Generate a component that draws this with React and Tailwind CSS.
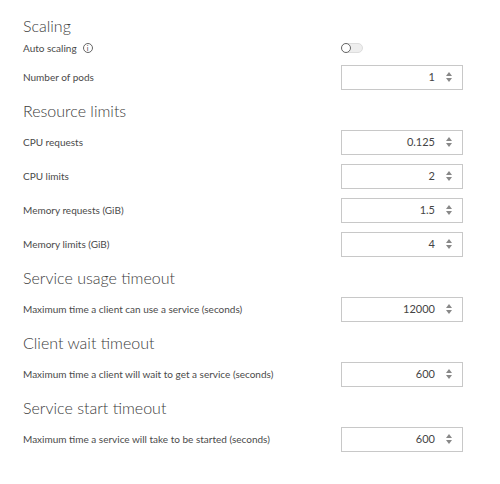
const Spin = () => (
  <svg width="8" height="12" viewBox="0 0 8 12" className="ml-[10px]">
    <path d="M4 1 L7 5 L1 5 Z" fill="#888" />
    <path d="M4 11 L7 7 L1 7 Z" fill="#888" />
  </svg>
);
const Input = ({ v }) => (
  <div className="w-[122px] h-[25px] border border-[#c8c8c8] bg-white flex items-center justify-end pr-[9px] text-[11px] text-[#444]">
    <span>{v}</span>
    <Spin />
  </div>
);
const Row = ({ label, v }) => (
  <div className="flex items-center justify-between h-[34px]">
    <span className="text-[10px] text-[#4a4a4a]">{label}</span>
    <Input v={v} />
  </div>
);
const H = ({ children, cls }) => (
  <div className={`text-[16px] text-[#3c3c3c] font-light leading-none ${cls}`}>{children}</div>
);
export default function App() {
  return (
    <div className="w-[500px] h-[484px] bg-white pl-[23px] pr-[37px] pt-[18px]" style={{ fontFamily: "Lato, 'Open Sans', sans-serif" }}>
      <H>Scaling</H>
      <div className="flex items-center justify-between h-[20px] mt-[4px] mb-[2px]">
        <span className="text-[10px] text-[#4a4a4a] flex items-center gap-[6px]">
          Auto scaling
          <span className="w-[10px] h-[10px] rounded-full border border-[#666] text-[7px] flex items-center justify-center leading-none">i</span>
        </span>
        <div className="w-[122px] flex">
          <div className="w-[22px] h-[10px] rounded-full bg-[#eee] border border-[#ddd] relative">
            <div className="absolute left-[-1px] top-[-1px] w-[10px] h-[10px] rounded-full bg-white border border-[#666]" />
          </div>
        </div>
      </div>
      <Row label="Number of pods" v="1" />
      <H cls="mt-[9px] mb-[6px]">Resource limits</H>
      <Row label="CPU requests" v="0.125" />
      <Row label="CPU limits" v="2" />
      <Row label="Memory requests (GiB)" v="1.5" />
      <Row label="Memory limits (GiB)" v="4" />
      <H cls="mt-[9px] mb-[6px]">Service usage timeout</H>
      <Row label="Maximum time a client can use a service (seconds)" v="12000" />
      <H cls="mt-[9px] mb-[6px]">Client wait timeout</H>
      <Row label="Maximum time a client will wait to get a service (seconds)" v="600" />
      <H cls="mt-[9px] mb-[6px]">Service start timeout</H>
      <Row label="Maximum time a service will take to be started (seconds)" v="600" />
    </div>
  );
}
